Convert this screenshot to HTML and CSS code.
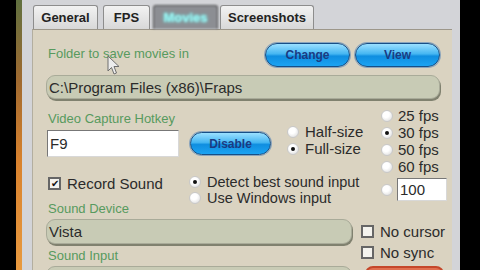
FILE: index.html
```html
<!DOCTYPE html>
<html lang="en">
<head>
    <meta charset="UTF-8">
    <title>Fraps - Movies</title>
    <link rel="stylesheet" href="styles.css">
</head>
<body>
    <div class="screen">
        <div class="window">
            <div class="tabs">
                <div class="tab t-general">General</div>
                <div class="tab t-fps">FPS</div>
                <div class="tab t-movies active">Movies</div>
                <div class="tab t-shots">Screenshots</div>
            </div>

            <div class="panel">
                <!-- Folder -->
                <div class="row-folder">
                    <span class="label">Folder to save movies in</span>
                    <div class="buttons">
                        <button class="pill wide">Change</button>
                        <button class="pill wide">View</button>
                    </div>
                </div>
                <div class="field path">C:\Program Files (x86)\Fraps</div>

                <!-- Hotkey / size / fps -->
                <div class="mid">
                    <div class="mid-left">
                        <div class="hotkey-row">
                            <div class="hotkey">
                                <span class="label">Video Capture Hotkey</span>
                                <div class="textbox">F9</div>
                            </div>
                            <button class="pill disable">Disable</button>
                            <div class="choices sizes">
                                <div class="opt"><span class="radio"></span>Half-size</div>
                                <div class="opt"><span class="radio on"></span>Full-size</div>
                            </div>
                        </div>
                        <div class="sound-row">
                            <div class="opt record"><span class="check">&#10004;</span>Record Sound</div>
                            <div class="choices inputs">
                                <div class="opt"><span class="radio on"></span>Detect best sound input</div>
                                <div class="opt"><span class="radio"></span>Use Windows input</div>
                            </div>
                        </div>
                    </div>
                    <div class="fps">
                        <div class="opt"><span class="radio"></span>25 fps</div>
                        <div class="opt"><span class="radio on"></span>30 fps</div>
                        <div class="opt"><span class="radio"></span>50 fps</div>
                        <div class="opt"><span class="radio"></span>60 fps</div>
                        <div class="opt custom"><span class="radio"></span><div class="textbox small">100</div></div>
                    </div>
                </div>

                <!-- Sound device -->
                <div class="lower">
                    <div class="lower-left">
                        <span class="label">Sound Device</span>
                        <div class="field device">Vista</div>
                        <span class="label">Sound Input</span>
                        <div class="field device"></div>
                    </div>
                    <div class="flags">
                        <div class="opt"><span class="check"></span>No cursor</div>
                        <div class="opt nosync"><span class="check"></span>No sync</div>
                        <div class="red-btn"></div>
                    </div>
                </div>
            </div>
        </div>

        <svg class="cursor" width="14" height="21" viewBox="0 0 14 21">
            <path d="M1 1 L1 16 L4.5 12.5 L7 19 L9.5 18 L7 11.5 L12 11.5 Z" fill="#ececec" stroke="#6e6e6e" stroke-width="1"/>
        </svg>
    </div>
</body>
</html>
```

FILE: styles.css
```css
body {
    margin: 0;
    background: #000;
    font-family: "Liberation Sans", Arial, sans-serif;
    color: #2b2b2b;
}
.screen {
    position: relative;
    width: 480px;
    height: 270px;
    overflow: hidden;
}
.window {
    box-sizing: border-box;
    margin-left: 16px;
    width: 444px;
    height: 270px;
    padding: 5px 8px 0 10px;
    background: #d3d4d8;
    border-left: 6px solid #c87a30;
    border-image: linear-gradient(#5f7040, #a06a30 30%, #d9822e 60%, #e89a40) 1;
    display: flex;
    flex-direction: column;
}

/* tabs */
.tabs {
    display: flex;
    height: 24px;
    margin-left: 1px;
}
.tab {
    box-sizing: border-box;
    height: 24px;
    border: 1px solid #8d8d8d;
    border-bottom: none;
    border-radius: 3px 3px 0 0;
    background: linear-gradient(#f2f2f2, #d8d8d8);
    font-size: 13px;
    font-weight: bold;
    color: #222;
    display: flex;
    align-items: center;
    justify-content: center;
}
.t-general { width: 65px; }
.t-fps { width: 47px; margin-left: 5px; }
.t-movies { width: 65px; margin-left: 3px; }
.t-shots { width: 94px; margin-left: 2px; }
.tab.active {
    background: #8c8e93;
    border-color: #4b4b4b;
    color: #9ff0ee;
    text-shadow: 0 0 3px #6ff;
    filter: blur(0.9px);
}

/* panel */
.panel {
    flex: 1;
    background: #dad3c1;
    border-top: 1px solid #9d978a;
    border-left: 1px solid #b3ae9f;
    padding: 0 5px 0 13px;
}
.label {
    display: block;
    font-size: 13px;
    line-height: 14px;
    color: #579a5e;
    padding-left: 2px;
}
.row-folder {
    display: flex;
    justify-content: space-between;
    align-items: center;
    margin-top: 12px;
    height: 25px;
    padding-right: 7px;
}
.row-folder .label {
    margin-top: -2px;
}
.buttons {
    display: flex;
    gap: 5px;
}
.pill {
    box-sizing: border-box;
    height: 23px;
    border: 1px solid #174f86;
    border-radius: 12px;
    background: linear-gradient(#9be0ff 0%, #45b6f2 45%, #0f8ee0 55%, #1ca3f2 100%);
    box-shadow: 0 0 0 1px #8aa4bc;
    color: #1b3b82;
    font-family: "Liberation Sans", Arial, sans-serif;
    font-size: 12px;
    font-weight: bold;
    padding: 0;
}
.pill.wide {
    width: 85px;
    height: 24px;
}
.field {
    box-sizing: border-box;
    background: #c8cbb5;
    border: 1px solid #a9ab99;
    border-radius: 9px;
    box-shadow: 1px 2px 0 #80816f;
    font-size: 15px;
    display: flex;
    align-items: center;
    padding-left: 2px;
}
.path {
    margin-top: 8px;
    width: 394px;
    height: 24px;
}

/* middle */
.mid {
    display: flex;
    height: 103px;
}
.mid-left {
    width: 335px;
}
.hotkey-row {
    display: flex;
    margin-top: 13px;
}
.hotkey {
    padding-left: 1px;
}
.hotkey .label {
    padding-left: 1px;
    margin-bottom: 4px;
}
.textbox {
    box-sizing: border-box;
    width: 132px;
    height: 27px;
    background: #fff;
    border: 1px solid #d8d8d8;
    border-top-color: #777;
    border-left-color: #777;
    font-size: 15px;
    padding-left: 2px;
    display: flex;
    align-items: center;
}
.textbox.small {
    width: 50px;
    height: 23px;
    margin-left: 4px;
}
.disable {
    width: 81px;
    align-self: flex-end;
    margin: 0 0 2px 11px;
}
.opt {
    display: flex;
    align-items: center;
    font-size: 15px;
    line-height: 17px;
    height: 17px;
    white-space: nowrap;
}
.radio {
    box-sizing: border-box;
    width: 12px;
    height: 12px;
    border-radius: 50%;
    border: 1px solid #c9c9c9;
    background: radial-gradient(circle at 40% 35%, #fff 35%, #d6d6d6);
    margin-right: 6px;
    display: flex;
    align-items: center;
    justify-content: center;
}
.radio.on::after {
    content: "";
    width: 4px;
    height: 4px;
    border-radius: 50%;
    background: #111;
}
.sizes {
    align-self: flex-end;
    margin-left: 16px;
}
.sound-row {
    display: flex;
    margin-top: 17px;
}
.record {
    width: 141px;
    padding-left: 2px;
    height: 16px;
    margin-top: 1px;
}
.check {
    box-sizing: border-box;
    width: 13px;
    height: 13px;
    border: 2px solid #666;
    background: #f4f3ee;
    margin-right: 6px;
    font-size: 10px;
    line-height: 9px;
    text-align: center;
    color: #111;
}
.inputs .opt {
    height: 16px;
    line-height: 16px;
    font-size: 14.5px;
}
.fps {
    padding-top: 8px;
}
.fps .radio {
    margin-right: 5px;
}
.fps .custom {
    height: 23px;
    margin-top: 3px;
}
.fps .custom .radio {
    margin-right: 0;
}

/* lower */
.lower {
    display: flex;
}
.lower-left {
    width: 306px;
}
.device {
    width: 306px;
    height: 25px;
    margin: 3px 0 5px;
}
.flags {
    margin-left: 9px;
    padding-top: 21px;
}
.flags .opt {
    height: 16px;
}
.nosync {
    margin-top: 5px;
}
.red-btn {
    width: 75px;
    height: 20px;
    margin: 6px 0 0 4px;
    border: 2px solid #c5472a;
    border-radius: 8px;
    background: #e07050;
}
.cursor {
    position: absolute;
    left: 107px;
    top: 55px;
    filter: blur(0.5px);
}
```
